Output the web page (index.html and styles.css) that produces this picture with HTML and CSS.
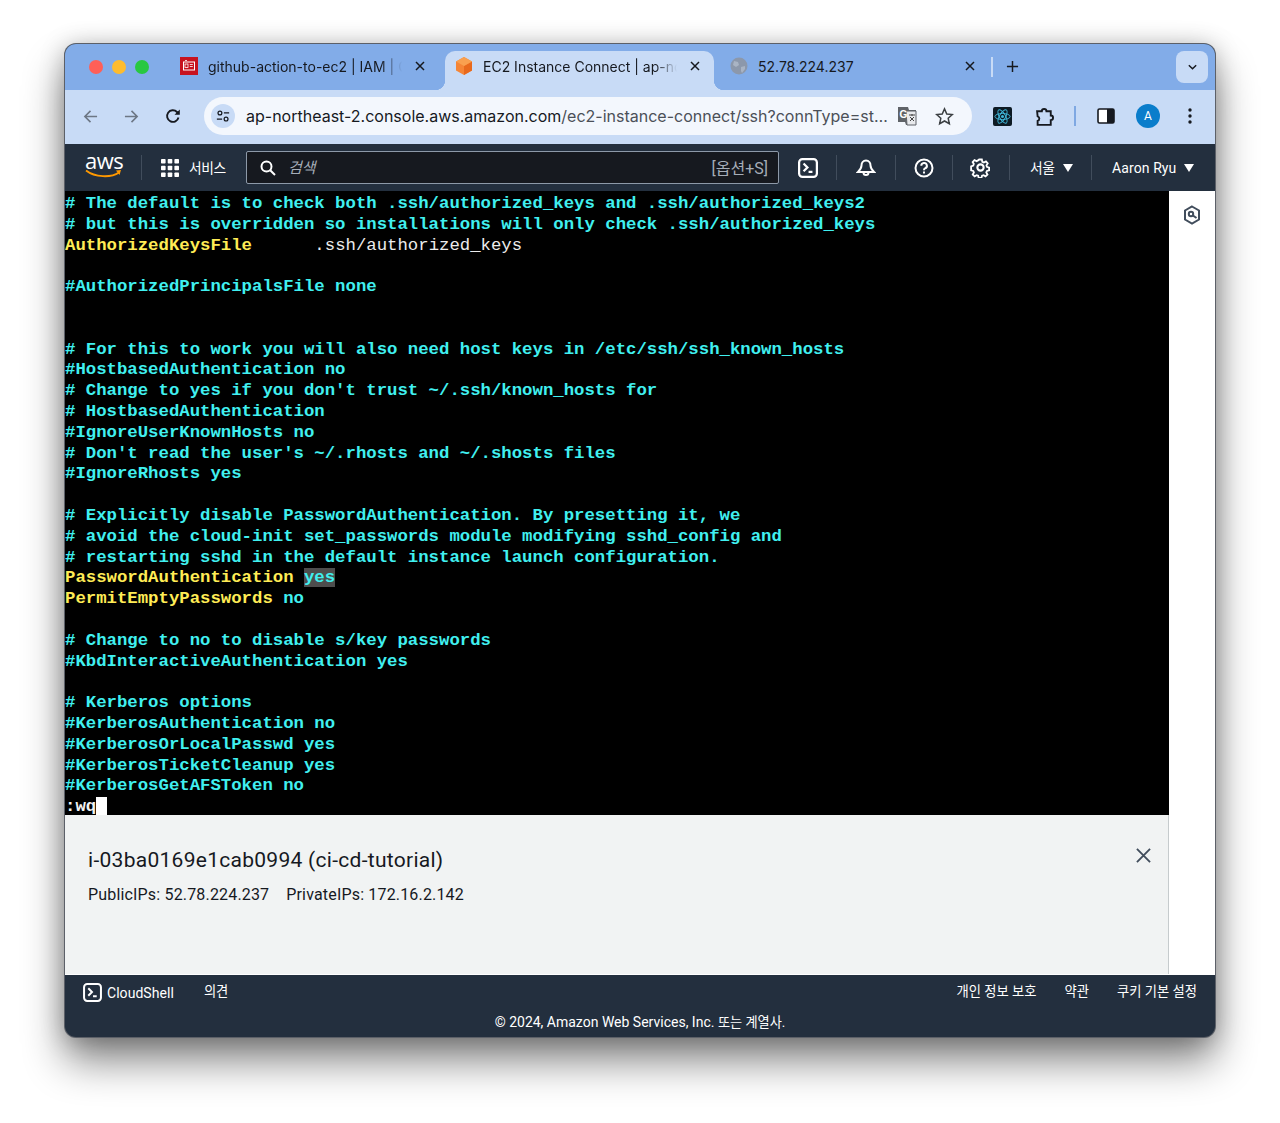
FILE: index.html
```html
<!DOCTYPE html>
<html lang="ko">
<head>
  <meta charset="utf-8">
  <title>EC2 Instance Connect</title>
  <link rel="stylesheet" href="styles.css">
</head>
<body>
  <div class="window">
    <!-- Tab strip -->
    <div class="tabstrip">
      <div class="lights"><i class="red"></i><i class="yellow"></i><i class="green"></i></div>
      <div class="tabs">
        <div class="tab">
          <svg class="favicon" viewBox="0 0 18 18"><rect width="18" height="18" fill="#c7131f"/><rect x="3.500" y="5" width="11" height="8" fill="none" stroke="#fff" stroke-width="1"/><rect x="5" y="7" width="3" height="3.500" fill="none" stroke="#fff" stroke-width=".8"/><path d="M9.800 7.500h3M9.800 9.500h3M5 3.500h2" stroke="#fff" stroke-width=".8"/></svg>
          <span class="tab-title">github-action-to-ec2 | IAM | C</span>
          <svg class="tab-close" viewBox="0 0 10 10"><path d="M1 1l8 8M9 1l-8 8"/></svg>
        </div>
        <div class="tab active">
          <svg class="favicon" viewBox="0 0 18 18"><path d="M9 0l8 4.500v9L9 18l-8-4.500v-9z" fill="#f58536"/><path d="M9 9l8-4.500v9L9 18z" fill="#e8691c"/><path d="M9 0l8 4.500L9 9 1 4.500z" fill="#f9a04f"/></svg>
          <span class="tab-title">EC2 Instance Connect | ap-no</span>
          <svg class="tab-close" viewBox="0 0 10 10"><path d="M1 1l8 8M9 1l-8 8"/></svg>
        </div>
        <div class="tab">
          <svg class="favicon" viewBox="0 0 18 18"><circle cx="9" cy="9" r="8.500" fill="#8c98ab"/><path d="M4 4l4 1 1 3-3 2-3-2zM11 10l4-1 0 3-3 4-1-2z" fill="#a9b4c4"/></svg>
          <span class="tab-title plain">52.78.224.237</span>
          <svg class="tab-close" viewBox="0 0 10 10"><path d="M1 1l8 8M9 1l-8 8"/></svg>
        </div>
      </div>
      <span class="tab-divider"></span>
      <svg class="new-tab" viewBox="0 0 14 14"><path d="M7 1v12M1 7h12"/></svg>
      <div class="tab-search">
        <svg viewBox="0 0 12 8"><path d="M2 2l4 4 4-4"/></svg>
      </div>
    </div>

    <!-- Toolbar -->
    <div class="toolbar">
      <svg class="tool nav-arrow" viewBox="0 0 16 16"><path d="M15 8H2M8 2L2 8l6 6"/></svg>
      <svg class="tool nav-arrow" viewBox="0 0 16 16"><path d="M1 8h13M8 2l6 6-6 6"/></svg>
      <svg class="tool reload" viewBox="0 0 16 16"><path d="M13.500 9.500A5.800 5.800 0 1 1 12 4l1.500 1.500"/><path class="solid" d="M14.800 1.500v5.300H9.500z"/></svg>
      <div class="omnibox">
        <span class="site-info">
          <svg viewBox="0 0 16 16"><circle cx="4.500" cy="4.500" r="2.200"/><path d="M9 4.500h6M1 11.500h6"/><circle cx="11.500" cy="11.500" r="2.200"/></svg>
        </span>
        <span class="url"><b>ap-northeast-2.console.aws.amazon.com</b>/ec2-instance-connect/ssh?connType=st…</span>
        <svg class="translate" viewBox="0 0 20 20"><path d="M1 1h10l1 3h7v15H9l-1-3H1z" fill="#5f6368"/><path d="M9 5h10v14H10z" fill="#e8eaed" stroke="#5f6368"/><text x="2.500" y="11.500" font-family="Liberation Sans" font-size="10" font-weight="700" fill="#fff">G</text><path d="M12 9h6M15 8v2M13 15l4-4M13 11l4 4" stroke="#444" stroke-width="1"/></svg>
        <svg class="star" viewBox="0 0 20 20"><path d="M10 2l2.400 5.400 5.800.6-4.300 3.900 1.200 5.700L10 14.700 4.900 17.600l1.200-5.700L1.800 8l5.800-.6z"/></svg>
      </div>
      <svg class="ext-react" viewBox="0 0 20 20"><rect width="20" height="20" rx="2" fill="#0d1a24"/><g fill="none" stroke="#3fb6d8" stroke-width="1"><ellipse cx="10" cy="10" rx="8" ry="3.200"/><ellipse cx="10" cy="10" rx="8" ry="3.200" transform="rotate(60 10 10)"/><ellipse cx="10" cy="10" rx="8" ry="3.200" transform="rotate(120 10 10)"/></g><circle cx="10" cy="10" r="1.600" fill="#3fb6d8"/></svg>
      <svg class="ext-puzzle" viewBox="0 0 20 20"><path d="M2 5h4.500a2.200 2.200 0 0 1 4.400 0H15v4a2.200 2.200 0 0 1 0 4.400V18H2.500v-3.800a2.300 2.300 0 0 0 0-4.400z"/></svg>
      <span class="tool-divider"></span>
      <svg class="side-panel" viewBox="0 0 18 18"><rect x="1" y="2" width="16" height="14" rx="1.500" fill="#fff" stroke="#16191f" stroke-width="1.600"/><rect x="10" y="2" width="7" height="14" fill="#16191f"/></svg>
      <span class="avatar">A</span>
      <svg class="menu-dots" viewBox="0 0 4 16"><circle cx="2" cy="2" r="1.700"/><circle cx="2" cy="8" r="1.700"/><circle cx="2" cy="14" r="1.700"/></svg>
    </div>

    <!-- AWS console nav -->
    <div class="console-nav">
      <div class="aws-logo">
        <span>aws</span>
        <svg viewBox="0 0 38 10"><path d="M1 1.500c9 7 25 7.500 33 2" fill="none" stroke="#f90" stroke-width="1.800"/><path d="M31 1.500l5-.5-1.500 5z" fill="#f90"/></svg>
      </div>
      <div class="nav-cell services">
        <svg class="grid-icon" viewBox="0 0 18 18"><g fill="#fff"><rect width="4.600" height="4.600" rx=".8"/><rect x="6.700" width="4.600" height="4.600" rx=".8"/><rect x="13.400" width="4.600" height="4.600" rx=".8"/><rect y="6.700" width="4.600" height="4.600" rx=".8"/><rect x="6.700" y="6.700" width="4.600" height="4.600" rx=".8"/><rect x="13.400" y="6.700" width="4.600" height="4.600" rx=".8"/><rect y="13.400" width="4.600" height="4.600" rx=".8"/><rect x="6.700" y="13.400" width="4.600" height="4.600" rx=".8"/><rect x="13.400" y="13.400" width="4.600" height="4.600" rx=".8"/></g></svg>
        <span>서비스</span>
      </div>
      <div class="search">
        <svg viewBox="0 0 16 16"><circle cx="6.500" cy="6.500" r="5"/><path d="M10.200 10.200L15 15"/></svg>
        <em>검색</em>
        <span class="shortcut">[옵션+S]</span>
      </div>
      <div class="nav-cell icon-cell first">
        <svg class="shell-icon" viewBox="0 0 18 18"><rect x="1" y="1" width="16" height="16" rx="3"/><path d="M5 5l3.500 3.500L5 12M9.500 12.500H13"/></svg>
      </div>
      <div class="nav-cell icon-cell bell-cell">
        <svg class="line-icon" viewBox="0 0 20 20"><path d="M10 2.500c-3 0-4.500 2.500-4.500 5 0 3-1.500 4.500-3.500 6.500h16c-2-2-3.500-3.500-3.500-6.500 0-2.500-1.500-5-4.500-5zM7.500 14.500a2.500 2.500 0 0 0 5 0"/></svg>
      </div>
      <div class="nav-cell icon-cell help-cell">
        <svg class="line-icon" viewBox="0 0 20 20"><circle cx="10" cy="10" r="8.500"/><path d="M7.300 7.800A2.800 2.800 0 1 1 11 10.400c-.8.400-1 .8-1 1.800"/><path class="dot" d="M10 13.600v1.800"/></svg>
      </div>
      <div class="nav-cell icon-cell gear-cell">
        <svg class="line-icon" viewBox="0 0 20 20"><path d="M8.500 1.500h3l.5 2.500 1.700.8 2.300-1.200 2 2.200-1.400 2.100.5 1.800 2.400.8v3l-2.400.7-.7 1.700 1.300 2.200-2.100 2-2.200-1.300-1.700.7-.7 2.400h-3l-.6-2.400-1.700-.7-2.200 1.300-2.100-2 1.300-2.200-.7-1.700-2.400-.7V9l2.400-.8.600-1.800-1.300-2.100 2-2.200 2.300 1.200 1.700-.8z" transform="translate(1.400 1.100) scale(.86)"/><circle cx="10" cy="10" r="3"/></svg>
      </div>
      <div class="nav-cell region"><span>서울</span><i class="caret"></i></div>
      <div class="nav-cell account"><span>Aaron Ryu</span><i class="caret"></i></div>
    </div>

    <!-- Terminal and side rail -->
    <div class="workspace">
      <pre class="terminal"><span class="c"># The default is to check both .ssh/authorized_keys and .ssh/authorized_keys2</span>
<span class="c"># but this is overridden so installations will only check .ssh/authorized_keys</span>
<span class="y">AuthorizedKeysFile</span><span class="w">      .ssh/authorized_keys</span>

<span class="c">#AuthorizedPrincipalsFile none</span>


<span class="c"># For this to work you will also need host keys in /etc/ssh/ssh_known_hosts</span>
<span class="c">#HostbasedAuthentication no</span>
<span class="c"># Change to yes if you don't trust ~/.ssh/known_hosts for</span>
<span class="c"># HostbasedAuthentication</span>
<span class="c">#IgnoreUserKnownHosts no</span>
<span class="c"># Don't read the user's ~/.rhosts and ~/.shosts files</span>
<span class="c">#IgnoreRhosts yes</span>

<span class="c"># Explicitly disable PasswordAuthentication. By presetting it, we</span>
<span class="c"># avoid the cloud-init set_passwords module modifying sshd_config and</span>
<span class="c"># restarting sshd in the default instance launch configuration.</span>
<span class="y">PasswordAuthentication</span> <span class="c match">yes</span>
<span class="y">PermitEmptyPasswords</span> <span class="c">no</span>

<span class="c"># Change to no to disable s/key passwords</span>
<span class="c">#KbdInteractiveAuthentication yes</span>

<span class="c"># Kerberos options</span>
<span class="c">#KerberosAuthentication no</span>
<span class="c">#KerberosOrLocalPasswd yes</span>
<span class="c">#KerberosTicketCleanup yes</span>
<span class="c">#KerberosGetAFSToken no</span>
<span class="cmd">:wq<i class="cursor"> </i></span></pre>
      <div class="rail">
        <svg viewBox="0 0 18 20"><path d="M9 1.500l7 4v9l-7 4-7-4v-9z"/><circle cx="8" cy="9" r="2.200"/><path d="M10 10.500l3.500 2.500"/></svg>
      </div>
    </div>

    <!-- Instance info -->
    <div class="info-row">
      <div class="info">
        <h1>i-03ba0169e1cab0994 (ci-cd-tutorial)</h1>
        <p><span>PublicIPs: 52.78.224.237</span><span>PrivateIPs: 172.16.2.142</span></p>
        <svg class="info-close" viewBox="0 0 16 16"><path d="M1 1l14 14M15 1L1 15"/></svg>
      </div>
      <div class="rail-blank"></div>
    </div>

    <!-- Footer -->
    <div class="footer">
      <div class="footer-top">
        <svg class="shell-icon small" viewBox="0 0 18 18"><rect x="1" y="1" width="16" height="16" rx="3"/><path d="M5 5l3.500 3.500L5 12M9.500 12.500H13"/></svg>
        <span class="shell-label">CloudShell</span>
        <span class="feedback">의견</span>
        <span class="legal">개인 정보 보호</span>
        <span class="legal">약관</span>
        <span class="legal">쿠키 기본 설정</span>
      </div>
      <div class="copyright">© 2024, Amazon Web Services, Inc. <span class="ko">또는 계열사.</span></div>
    </div>
  </div>
</body>
</html>
```

FILE: styles.css
```css
/* Page: white backdrop with the mac window floating on it */
html, body {
  margin: 0;
  height: 1123px;
  overflow: hidden;
  background: #fff;
}

body {
  padding: 44px 65px 0;
  box-sizing: border-box;
  font-family: Roboto, "Noto Sans CJK KR", sans-serif;
}

.window {
  height: 993px;
  display: flex;
  flex-direction: column;
  border-radius: 11px;
  overflow: hidden;
  background: #232f3e;
  box-shadow: 0 0 0 1px #5c6068, 0 24px 42px rgba(0, 0, 0, .48), 0 2px 24px rgba(0, 0, 0, .25);
}

/* Tab strip */
.tabstrip {
  height: 46px;
  flex: none;
  display: flex;
  align-items: flex-end;
  background: #82ace8;
}

.lights {
  width: 105px;
  height: 46px;
  flex: none;
  display: flex;
  align-items: center;
  gap: 9px;
  padding-left: 24px;
  box-sizing: border-box;
}

.lights i {
  width: 14px;
  height: 14px;
  border-radius: 50%;
}

.lights .red { background: #ff5f57; }
.lights .yellow { background: #febc2e; }
.lights .green { background: #28c840; }

.tabs {
  display: flex;
  gap: 6px;
}

.tab {
  position: relative;
  width: 269px;
  height: 39px;
  box-sizing: border-box;
  padding: 0 14px 9px 10px;
  display: flex;
  align-items: center;
  border-radius: 10px 10px 0 0;
  font-family: Inter, "Liberation Sans", sans-serif;
  font-size: 14px;
  color: #16191f;
}

.tab.active {
  background: #c8dbf6;
}

.tab.active::before,
.tab.active::after {
  content: "";
  position: absolute;
  bottom: 0;
  width: 10px;
  height: 10px;
}

.tab.active::before {
  left: -10px;
  background: radial-gradient(circle at 0 0, transparent 10px, #c8dbf6 10.500px);
}

.tab.active::after {
  right: -10px;
  background: radial-gradient(circle at 100% 0, transparent 10px, #c8dbf6 10.500px);
}

.favicon {
  width: 18px;
  height: 18px;
  flex: none;
}

.tab-title {
  flex: 1;
  min-width: 0;
  margin: 0 8px 0 10px;
  white-space: nowrap;
  -webkit-mask-image: linear-gradient(to right, #000 172px, transparent 194px);
  mask-image: linear-gradient(to right, #000 172px, transparent 194px);
}

.tab-title.plain {
  -webkit-mask-image: none;
  mask-image: none;
}

.tab-close {
  width: 10px;
  height: 10px;
  flex: none;
  fill: none;
  stroke: #16191f;
  stroke-width: 1.500;
}

.tab-divider {
  width: 2px;
  height: 20px;
  flex: none;
  margin: 0 0 13px 2px;
  background: #c8dbf6;
}

.new-tab {
  width: 13px;
  height: 13px;
  flex: none;
  margin: 0 0 17px 13px;
  fill: none;
  stroke: #16191f;
  stroke-width: 1.600;
}

.tab-search {
  width: 32px;
  height: 32px;
  flex: none;
  margin: 0 7px 7px auto;
  display: flex;
  align-items: center;
  justify-content: center;
  border-radius: 8px;
  background: #c8dbf6;
}

.tab-search svg {
  width: 11px;
  height: 8px;
  fill: none;
  stroke: #16191f;
  stroke-width: 1.600;
}

/* Toolbar */
.toolbar {
  height: 54px;
  flex: none;
  display: flex;
  align-items: center;
  padding: 0 0 2px 18px;
  box-sizing: border-box;
  background: #c8dbf6;
}

.tool {
  width: 15px;
  height: 15px;
  flex: none;
  fill: none;
}

.nav-arrow {
  margin-right: 26px;
  stroke: #6d7785;
  stroke-width: 1.700;
}

.tool.reload {
  width: 16px;
  height: 16px;
  margin-right: 23px;
  stroke: #16191f;
  stroke-width: 1.900;
}

.reload .solid {
  fill: #16191f;
  stroke: none;
}

.omnibox {
  width: 768px;
  height: 38px;
  flex: none;
  display: flex;
  align-items: center;
  box-sizing: border-box;
  padding: 0 18px 0 7px;
  border-radius: 19px;
  background: #f3f7fd;
}

.site-info {
  width: 24px;
  height: 24px;
  flex: none;
  display: flex;
  align-items: center;
  justify-content: center;
  border-radius: 50%;
  background: #c8dbf6;
}

.site-info svg {
  width: 14px;
  height: 14px;
  fill: none;
  stroke: #16191f;
  stroke-width: 1.400;
}

.url {
  flex: 1;
  min-width: 0;
  margin-left: 11px;
  font-family: Inter, "Liberation Sans", sans-serif;
  font-size: 16px;
  color: #4b5058;
  white-space: nowrap;
  overflow: hidden;
}

.url b {
  font-weight: 400;
  color: #16191f;
}

.translate {
  width: 20px;
  height: 20px;
  flex: none;
  margin: 0 18px 0 10px;
}

.star {
  width: 19px;
  height: 19px;
  flex: none;
  fill: none;
  stroke: #3c4043;
  stroke-width: 1.600;
}

.ext-react {
  width: 19px;
  height: 19px;
  flex: none;
  margin-left: 21px;
}

.ext-puzzle {
  width: 21px;
  height: 21px;
  flex: none;
  margin-left: 23px;
  fill: none;
  stroke: #16191f;
  stroke-width: 1.800;
}

.tool-divider {
  width: 2px;
  height: 20px;
  flex: none;
  margin: 0 21px 0 18px;
  background: #7fa8e2;
}

.side-panel {
  width: 18px;
  height: 18px;
  flex: none;
}

.avatar {
  width: 24px;
  height: 24px;
  flex: none;
  margin-left: 21px;
  border-radius: 50%;
  background: #0a7dcb;
  color: #fff;
  font-size: 12px;
  line-height: 24px;
  text-align: center;
}

.menu-dots {
  width: 4px;
  height: 16px;
  flex: none;
  margin-left: 28px;
  fill: #16191f;
}

/* AWS console nav */
.console-nav {
  height: 47px;
  flex: none;
  display: flex;
  box-sizing: border-box;
  background: #232f3e;
  color: #fff;
  font-size: 14px;
}

.aws-logo {
  width: 76px;
  flex: none;
  box-sizing: border-box;
  padding: 5px 0 0 20px;
  font-family: "Open Sans", sans-serif;
  font-size: 22px;
  line-height: 22px;
  letter-spacing: -.5px;
}

.aws-logo span {
  display: block;
}

.aws-logo svg {
  display: block;
  width: 38px;
  height: 10px;
  margin-top: -2px;
}

/* separator lines live on the inner cell edge */
.nav-cell {
  position: relative;
  flex: none;
  display: flex;
  align-items: center;
  box-sizing: border-box;
}

.nav-cell::before {
  content: "";
  position: absolute;
  left: 0;
  top: 11px;
  bottom: 11px;
  width: 1px;
  background: #414d5c;
}

.services {
  width: 105px;
  padding: 0 0 2px 20px;
  gap: 10px;
}

.grid-icon {
  width: 18px;
  height: 18px;
  margin-top: 2px;
}

.services span,
.region span {
  font-size: 13.800px;
  letter-spacing: -.4px;
}

.search {
  width: 533px;
  height: 33px;
  flex: none;
  align-self: flex-start;
  margin-top: 7px;
  display: flex;
  align-items: center;
  box-sizing: border-box;
  padding: 0 10px 2px 13px;
  border: 1px solid #8d99a8;
  border-radius: 2px;
  background: #16191f;
  color: #a5adb8;
}

.search svg {
  width: 16px;
  height: 16px;
  flex: none;
  margin-top: 2px;
  fill: none;
  stroke: #fff;
  stroke-width: 2;
}

.search em {
  margin-left: 12px;
  flex: 1;
  font-size: 15px;
}

.shortcut {
  font-size: 16px;
}

.icon-cell {
  justify-content: center;
}

.icon-cell.first { width: 57px; }
.icon-cell.first::before { display: none; }
.bell-cell { width: 59px; }
.help-cell { width: 57px; }
.gear-cell { width: 57px; }

.shell-icon {
  width: 20px;
  height: 20px;
  fill: none;
  stroke: #fff;
  stroke-width: 2;
}

.line-icon {
  width: 20px;
  height: 20px;
  fill: none;
  stroke: #fff;
  stroke-width: 2;
}

.gear-cell .line-icon {
  width: 21px;
  height: 21px;
}

.region {
  width: 82px;
  padding: 0 0 0 21px;
  gap: 7px;
}

.region span {
  margin-top: -2px;
}

.account {
  width: 123px;
  padding-left: 21px;
  gap: 7px;
  letter-spacing: .1px;
}

.caret {
  width: 0;
  height: 0;
  margin-left: 1px;
  border-left: 5px solid transparent;
  border-right: 5px solid transparent;
  border-top: 8px solid #fff;
}

/* Terminal */
.workspace {
  height: 624px;
  flex: none;
  display: flex;
  background: #fff;
}

.terminal {
  width: 1104px;
  flex: none;
  box-sizing: border-box;
  margin: 0;
  padding-top: 3px;
  overflow: hidden;
  background: #000;
  font-family: "Liberation Mono", monospace;
  font-size: 17.320px;
  line-height: 20.800px;
  font-weight: 700;
}

.c { color: #40f0f0; }
.y { color: #ffec55; }
.w { color: #ececec; font-weight: 400; }
.match { background: #4d4d4d; }
.cmd { color: #f2f2f2; }

.cursor {
  background: #fff;
  font-style: normal;
}

.rail {
  flex: 1;
  display: flex;
  justify-content: center;
  padding-top: 14px;
}

.rail svg {
  width: 18px;
  height: 20px;
  fill: none;
  stroke: #414d5c;
  stroke-width: 2;
}

/* Instance info */
.info-row {
  height: 159px;
  flex: none;
  display: flex;
  background: #fff;
}

.info {
  position: relative;
  width: 1104px;
  flex: none;
  box-sizing: border-box;
  padding: 32px 23px 0;
  border-right: 1px solid #c6cbcd;
  background: #f1f3f3;
  color: #16191f;
}

.info h1 {
  margin: 0;
  font-size: 21px;
  font-weight: 400;
  line-height: 26px;
  letter-spacing: .28px;
}

.info p {
  display: flex;
  gap: 17px;
  margin: 10px 0 0;
  font-size: 16px;
  line-height: 24px;
  letter-spacing: .17px;
}

.info-close {
  position: absolute;
  top: 33px;
  right: 17px;
  width: 15px;
  height: 15px;
  fill: none;
  stroke: #414d5c;
  stroke-width: 2;
}

.rail-blank {
  flex: 1;
}

/* Footer */
.footer {
  flex: 1;
  border-top: 1px solid #fff;
  color: #fff;
  font-size: 14px;
}

.footer-top {
  display: flex;
  align-items: center;
  height: 35px;
  padding: 0 18px;
}

.shell-icon.small {
  width: 19px;
  height: 19px;
  stroke-width: 1.900;
}

.shell-label {
  margin-left: 5px;
  letter-spacing: .05px;
}

.feedback {
  margin: -1px auto 0 30px;
  font-size: 13.300px;
  line-height: 16px;
}

.legal {
  margin: -1px 0 0 28px;
  font-size: 13.300px;
  line-height: 16px;
}

.copyright {
  margin-top: 2px;
  text-align: center;
}

.ko {
  font-size: 13.200px;
}
```
